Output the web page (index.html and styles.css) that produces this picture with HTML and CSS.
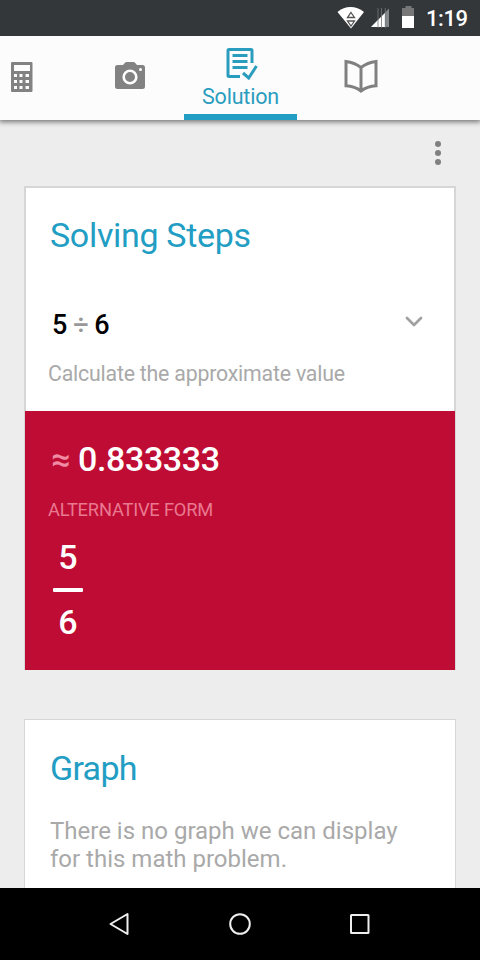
FILE: index.html
```html
<!DOCTYPE html>
<html lang="en">
<head>
<meta charset="utf-8">
<title>Solution</title>
<link rel="stylesheet" href="styles.css">
</head>
<body>
<div class="screen">
  <header class="status">
    <svg class="status-icons" width="80" height="36" viewBox="0 0 80 36">
      <path d="M.5 12C8 5.200 19 5.200 27 12L14 28.500Z" fill="#fff"/>
      <path d="M14 12.500l3.500 5h-7zM14 26l3.500-5h-7z" fill="#fff" stroke="#555" stroke-width="1.300"/>
      <path d="M34 27L52 8.500V27Z" fill="#85888a"/>
      <path d="M34 27L48 13V27Z" fill="#fff"/>
      <path d="M41 8v20M44.500 8v20M48.300 8v20" stroke="#73777a" stroke-width=".8"/>
      <path d="M68.500 6h6v2H77v8H65V8h3.500z" fill="#777"/>
      <path d="M65 16h12v12H65z" fill="#fff"/>
    </svg>
    <span class="clock">1:19</span>
  </header>
  <nav class="tabs">
    <a class="tab tab-calc">
      <svg width="22" height="30" viewBox="0 0 22 30"><path fill="#828282" fill-rule="evenodd" d="M1 0h19.500a1 1 0 0 1 1 1v28a1 1 0 0 1-1 1H1a1 1 0 0 1-1-1V1a1 1 0 0 1 1-1zM3 3v6h16V3zM3 12v3h3v-3zM8.500 12v3h3v-3zM14.500 12v3h3.500v-3zM3 18v3h3v-3zM8.500 18v3h3v-3zM14.500 18v3h3.500v-3zM3 24v3h3v-3zM8.500 24v3h3v-3zM14.500 24v3h3.500v-3z"/></svg>
    </a>
    <a class="tab tab-camera">
      <svg width="30" height="27" viewBox="0 0 30 27"><path fill="#828282" d="M2.500 3H8l2-2.300Q10.500 0 11.500 0h7q1 0 1.500.7L22 3h5.500Q30 3 30 5.500v19q0 2.500-2.500 2.500h-25Q0 27 0 24.500v-19Q0 3 2.500 3z"/><circle cx="15" cy="15" r="6.300" fill="none" stroke="#fff" stroke-width="2.600"/><circle cx="25.500" cy="7.500" r="1.500" fill="#fff"/></svg>
    </a>
    <a class="tab tab-solution">
      <svg width="32" height="34" viewBox="0 0 32 34" fill="none" stroke="#2a9dbf" stroke-width="3"><path d="M14 29.500H3Q2 29.500 2 28.500V3.500Q2 2.500 3 2.500h22Q26 2.500 26 3.500V16" /><path d="M6.500 8.500H21.500M6.500 14.500H21.500M6.500 20.500H21.500"/><path d="M17 26l5.700 5L30.500 19"/></svg>
      <span>Solution</span>
    </a>
    <a class="tab tab-book">
      <svg width="34" height="34" viewBox="0 0 34 34" fill="none" stroke="#808080" stroke-width="3"><path d="M17 8.500Q10.500 3.500 2 2.500v24.300Q11 27.500 17 32Q23 27.500 32 26.800V2.500Q23.500 3.500 17 8.500zM17 8.500V31.500"/></svg>
    </a>
  </nav>
  <main class="content">
    <div class="toolbar">
      <svg width="6" height="24" viewBox="0 0 6 24" fill="#808080"><circle cx="3" cy="3" r="3"/><circle cx="3" cy="12" r="3"/><circle cx="3" cy="21" r="3"/></svg>
    </div>
    <section class="card steps">
      <h2>Solving Steps</h2>
      <div class="step">
        <p class="expression">5<span class="operator">÷</span>6</p>
        <svg width="18" height="12" viewBox="0 0 18 12" fill="none" stroke="#a0a0a0" stroke-width="2.700" stroke-linecap="round" stroke-linejoin="round"><path d="M2 2l7 7 7-7"/></svg>
      </div>
      <p class="hint">Calculate the approximate value</p>
      <div class="result">
        <p class="value"><span class="approx">≈</span>0.833333</p>
        <p class="label">ALTERNATIVE FORM</p>
        <div class="fraction"><span>5</span><i></i><span>6</span></div>
      </div>
    </section>
    <section class="card graph">
      <h2>Graph</h2>
      <p class="message">There is no graph we can display<br>for this math problem.</p>
    </section>
  </main>
  <footer class="navbar">
    <svg width="20" height="24" viewBox="0 0 20 24"><path d="M1.500 12L18.500 2v20z"/></svg>
    <svg width="22" height="24" viewBox="0 0 22 24"><circle cx="11" cy="12" r="9.800"/></svg>
    <svg width="20" height="24" viewBox="0 0 20 24"><rect x="1" y="3" width="17.500" height="18" rx=".5"/></svg>
  </footer>
</div>
</body>
</html>
```
FILE: styles.css
```css
* { box-sizing: border-box; margin: 0; padding: 0; }
body { font-family: Roboto, sans-serif; background: #ededed; }
.screen { width: 480px; height: 960px; display: flex; flex-direction: column; overflow: hidden; }

.status { height: 36px; flex: none; background: #33373a; display: flex; padding-left: 337px; color: #fff; z-index: 2; }
.clock { font-size: 22px; font-weight: 500; line-height: 37px; margin-left: 9px; letter-spacing: -.4px; }

.tabs { height: 84px; flex: none; background: #fcfcfc; display: flex; box-shadow: 0 1px 5px 1px rgba(0, 0, 0, .5); z-index: 1; }
.tab { display: flex; flex-direction: column; align-items: center; flex: none; }
.tab svg { display: block; }
.tab-calc { width: 76px; align-items: flex-start; padding: 26px 0 0 11px; }
.tab-camera { width: 108px; padding-top: 26px; }
.tab-solution { width: 113px; padding-top: 11px; border-bottom: 6px solid #229dc3; color: #2a9dbf; }
.tab-solution svg { margin-left: 3px; }
.tab-solution span { font-size: 21.500px; line-height: 30px; margin-top: 1px; letter-spacing: -.2px; }
.tab-book { width: 128px; padding-top: 23px; }

.content { flex: 1; min-height: 0; overflow: hidden; padding: 0 24px; }
.toolbar { height: 66px; display: flex; justify-content: flex-end; padding: 21px 15px 0 0; }
.card { background: #fff; border: 2px solid #d6d6d6; }
.card h2 { font-size: 34px; font-weight: 400; line-height: 40px; color: #229dc3; letter-spacing: -.32px; }
.steps { height: 484px; border-bottom: 0; }
.steps h2 { padding: 27px 0 0 24px; }
.step { height: 40px; margin-top: 50px; padding: 0 31px 0 26px; display: flex; justify-content: space-between; }
.step svg { margin-top: 11px; }
.expression { font-size: 27px; line-height: 40px; font-weight: 500; color: #000; display: flex; }
.operator { color: #999; width: 27px; text-align: center; font-size: 27px; line-height: 41px; }
.hint { font-size: 21.300px; letter-spacing: -.2px; line-height: 30px; margin: 14px 0 22px; padding-left: 22px; color: #a9a9a9; height: 30px; }
.result { height: 259px; margin: 0 -1px; background: #bf0c34; color: #fff; padding: 28px 0 0 23px; }
.value { height: 40px; font-size: 34px; font-weight: 500; line-height: 40px; padding-left: 3px; display: flex; letter-spacing: -.38px; }
.approx { color: #f08ba4; width: 27px; font-size: 34px; line-height: 40px; }
.label { font-size: 18.300px; letter-spacing: -.2px; line-height: 26px; margin-top: 18px; color: #e97991; }
.fraction { width: 30px; margin: 11px 0 0 5px; display: flex; flex-direction: column; align-items: center; font-size: 34px; font-weight: 500; line-height: 46px; }
.fraction i { width: 30px; height: 4px; border-radius: 1px; background: #fff; margin: 8px 0 7px; }
.graph { height: 260px; margin-top: 49px; border-width: 1px; }
.graph h2 { padding: 28px 0 0 25px; letter-spacing: -.7px; }
.message { font-size: 24px; line-height: 28px; color: #a9a9a9; padding: 29px 0 0 25px; white-space: nowrap; }

.navbar { height: 72px; flex: none; background: #000; display: flex; justify-content: space-between; align-items: center; padding: 0 110px 0 109px; }
.navbar svg { fill: none; stroke: #eee; stroke-width: 2; stroke-linejoin: round; }
```
